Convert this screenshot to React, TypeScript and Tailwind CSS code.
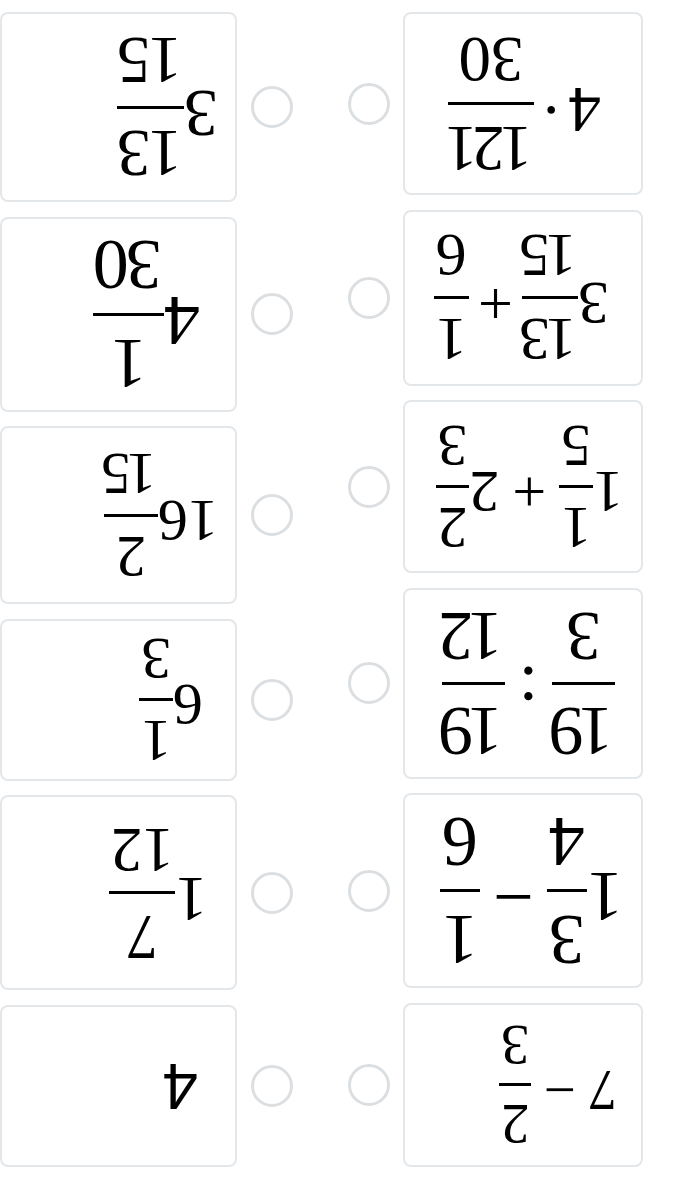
import type { ReactNode } from "react";

const serif = "[font-family:'Liberation_Serif','Times_New_Roman',serif]";

function Frac({ n, d, nc = "", dc = "" }: { n: string; d: string; nc?: string; dc?: string }) {
  return (
    <span className="inline-flex flex-col items-stretch text-center leading-none">
      <span className={`px-[0.03em] pb-[0.16em] ${nc}`}>{n}</span>
      <span className="h-[3px] bg-black" />
      <span className={`px-[0.03em] pt-[0.16em] ${dc}`}>{d}</span>
    </span>
  );
}

function Num({ children }: { children: ReactNode }) {
  return <span className="pb-[0.18em] leading-none">{children}</span>;
}

function Op({ children, m = "mx-[0.15em]" }: { children: ReactNode; m?: string }) {
  return <span className={`pb-[0.18em] leading-none ${m}`}>{children}</span>;
}

function Radio() {
  return <span className="h-[42px] w-[42px] shrink-0 rounded-full border-[3px] border-[#dcdfe2] bg-white" />;
}

type Item = { card: string; body: ReactNode };

const tight = "tracking-[-0.08em]";
const loose = "tracking-[-0.04em]";

const left: Item[] = [
  {
    card: "h-[164px] pl-[24px] text-[57px]",
    body: (
      <>
        <Num>7</Num>
        <Op m="mx-[0.22em]">−</Op>
        <Frac n="2" d="3" />
      </>
    ),
  },
  {
    card: "h-[195px] pl-[18px] text-[72px]",
    body: (
      <>
        <Num>1</Num>
        <Frac n="3" d="4" />
        <Op m="mx-[0.18em]">−</Op>
        <Frac n="1" d="6" />
      </>
    ),
  },
  {
    card: "h-[191px] pl-[26px] text-[70px]",
    body: (
      <>
        <Frac n="19" d="3" nc={tight} />
        <Op m="mx-[0.2em]">:</Op>
        <Frac n="19" d="12" nc={tight} dc={tight} />
      </>
    ),
  },
  {
    card: "h-[173px] pl-[18px] text-[60px]",
    body: (
      <>
        <Num>1</Num>
        <Frac n="1" d="5" />
        <Op m="mx-[0.22em]">+</Op>
        <Num>2</Num>
        <Frac n="2" d="3" />
      </>
    ),
  },
  {
    card: "h-[176px] pl-[32px] text-[62px]",
    body: (
      <>
        <Num>3</Num>
        <Frac n="13" d="15" nc={tight} dc={tight} />
        <Op>+</Op>
        <Frac n="1" d="6" />
      </>
    ),
  },
  {
    card: "h-[183px] pl-[40px] text-[65px]",
    body: (
      <>
        <Num>4</Num>
        <Op m="mx-[0.1em]">·</Op>
        <Frac n="121" d="30" nc={tight} />
      </>
    ),
  },
];

const right: Item[] = [
  {
    card: "h-[162px] pl-[37px] text-[64px]",
    body: <span className="[font-family:'Liberation_Sans',Arial,sans-serif] leading-none">4</span>,
  },
  {
    card: "h-[195px] pl-[28px] text-[63px]",
    body: (
      <>
        <Num>1</Num>
        <Frac n="7" d="12" />
      </>
    ),
  },
  {
    card: "h-[162px] pl-[32px] text-[60px]",
    body: (
      <>
        <Num>6</Num>
        <Frac n="1" d="3" />
      </>
    ),
  },
  {
    card: "h-[178px] pl-[17px] text-[60px]",
    body: (
      <>
        <Num>16</Num>
        <Frac n="2" d="15" dc={tight} />
      </>
    ),
  },
  {
    card: "h-[195px] pl-[35px] text-[72px]",
    body: (
      <>
        <Num>4</Num>
        <Frac n="1" d="30" dc={loose} />
      </>
    ),
  },
  {
    card: "h-[190px] pl-[17px] text-[68px]",
    body: (
      <>
        <Num>3</Num>
        <Frac n="13" d="15" nc={loose} dc={loose} />
      </>
    ),
  },
];

function Card({ item, width }: { item: Item; width: string }) {
  return (
    <div
      className={`flex shrink-0 items-center rounded-[8px] border-2 border-[#e4e7ea] bg-white text-black ${serif} ${width} ${item.card}`}
    >
      <div className="flex items-center">{item.body}</div>
    </div>
  );
}

export default function App() {
  return (
    <div className="h-[1182px] w-[681px] rotate-180 overflow-hidden bg-white">
      <div className="flex pt-[15px] pl-[38px]">
        <div className="flex w-[295px] flex-col gap-[14.5px]">
          {left.map((item, i) => (
            <div key={i} className="flex items-center gap-[13px]">
              <Card item={item} width="w-[240px]" />
              <Radio />
            </div>
          ))}
        </div>
        <div className="ml-[55px] flex flex-col gap-[14.5px]">
          {right.map((item, i) => (
            <div key={i} className="flex items-center gap-[14px]">
              <Radio />
              <Card item={item} width="w-[237px]" />
            </div>
          ))}
        </div>
      </div>
    </div>
  );
}
